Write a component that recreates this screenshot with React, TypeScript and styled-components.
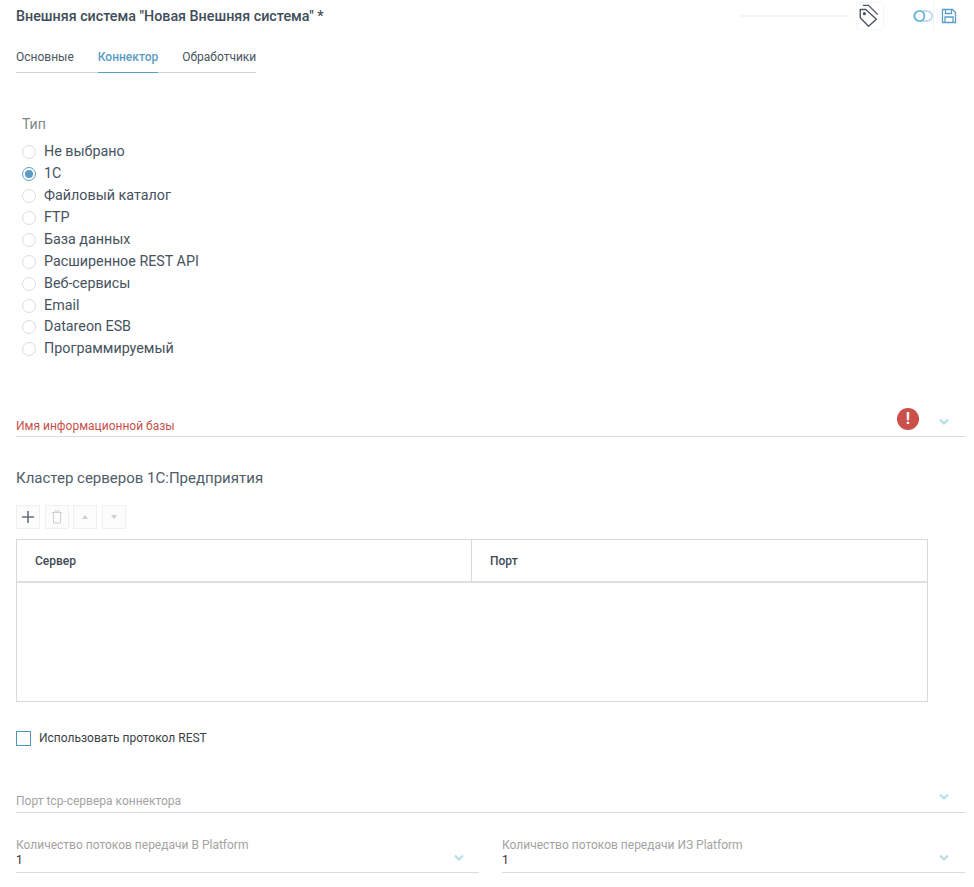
import React, { useState } from "react";
import styled, { createGlobalStyle } from "styled-components";

const GlobalStyle = createGlobalStyle`
  html, body {
    margin: 0;
    padding: 0;
    background: #fff;
    font-family: Roboto, "Liberation Sans", sans-serif;
  }
`;

const Page = styled.div`
  width: 974px;
  height: 887px;
  box-sizing: border-box;
  padding: 0 9px 0 16px;
  overflow: hidden;
`;

const Header = styled.header`
  display: flex;
  align-items: center;
  height: 30px;
  padding-top: 1px;
  box-sizing: border-box;
`;

const Title = styled.h1`
  flex: 1;
  margin: 0;
  font-size: 14.3px;
  font-weight: 500;
  color: #414d59;
`;

const HeaderLine = styled.div`
  width: 110px;
  height: 2px;
  margin-right: 7px;
  background: #f5f5f5;
`;

const TagButton = styled.button`
  display: flex;
  align-items: center;
  justify-content: center;
  width: 28px;
  height: 28px;
  padding: 0 2px 0 0;
  margin-right: 29px;
  background: #fff;
  border: 1px solid #f6f6f6;
  border-radius: 4px;
`;

const ToggleWrap = styled.div`
  display: flex;
  align-items: center;
  height: 28px;
  margin-right: -1px;
  border-right: 1px solid #f3f3f3;
`;

const SaveWrap = styled.div`
  display: flex;
  align-items: center;
  margin: 0 8px 0 8px;
`;

const Tabs = styled.nav`
  display: flex;
  gap: 24px;
  width: 240px;
  margin-top: 13px;
  border-bottom: 1px solid #d4d4d4;
`;

const Tab = styled.div<{ $active?: boolean }>`
  height: 30px;
  line-height: 28px;
  margin-bottom: -1px;
  box-sizing: border-box;
  font-size: 12px;
  font-weight: ${(p) => (p.$active ? 500 : 400)};
  color: ${(p) => (p.$active ? "#5b9cc4" : "#4a5560")};
  border-bottom: 1px solid ${(p) => (p.$active ? "#5b9cc4" : "transparent")};
`;

const RadioGroup = styled.section`
  margin-top: 42px;
  padding-left: 6px;
`;

const GroupLabel = styled.div`
  font-size: 14px;
  line-height: 18px;
  color: #7d8a86;
  margin-bottom: 7.4px;
`;

const RadioRow = styled.label`
  display: flex;
  align-items: center;
  height: 21.9px;
  font-size: 14.3px;
  color: #46525e;
`;

const RadioMark = styled.span<{ $checked?: boolean }>`
  position: relative;
  width: 14px;
  height: 14px;
  box-sizing: border-box;
  margin: 2px 8px 0 0;
  border-radius: 50%;
  border: 1px solid ${(p) => (p.$checked ? "#5b9cc4" : "#dcdcdc")};
  background: #fff;

  &::after {
    content: "";
    display: ${(p) => (p.$checked ? "block" : "none")};
    position: absolute;
    inset: 2px;
    border-radius: 50%;
    background: #5b9cc4;
  }
`;

const Field = styled.div<{ $height: number }>`
  position: relative;
  flex: 1;
  height: ${(p) => p.$height}px;
  box-sizing: border-box;
  border-bottom: 1px solid #dcdcdc;
`;

const FieldLabel = styled.div<{ $error?: boolean }>`
  font-size: 12px;
  line-height: 14px;
  color: ${(p) => (p.$error ? "#c9504a" : "#a3a3a3")};
`;

const FieldValue = styled.div`
  font-size: 12px;
  line-height: 14px;
  margin-top: 1px;
  color: #333;
`;

const BaseField = styled(Field)`
  margin-top: 48.6px;
  display: flex;
  align-items: flex-end;
  padding-bottom: 3px;
`;

const Chevron = styled.svg<{ $right: number; $top: number }>`
  position: absolute;
  right: ${(p) => p.$right}px;
  top: ${(p) => p.$top}px;
`;

const ErrorBadge = styled.div`
  position: absolute;
  right: 46px;
  top: 0;
  width: 22px;
  height: 22px;
  border-radius: 50%;
  background: #cb4f4a;
  display: flex;
  align-items: center;
  justify-content: center;
  color: #fff;
  font-size: 16px;
  font-weight: 700;
`;

const SectionTitle = styled.h2`
  margin: 32px 0 0;
  font-size: 15px;
  line-height: 18px;
  font-weight: 400;
  color: #4f5c68;
`;

const Toolbar = styled.div`
  display: flex;
  gap: 4.7px;
  margin-top: 18px;
`;

const ToolButton = styled.button`
  display: flex;
  align-items: center;
  justify-content: center;
  width: 24px;
  height: 24px;
  padding: 0;
  background: #fcfcfc;
  border: 1px solid #f0f0f0;
`;

const Table = styled.div`
  width: 912px;
  height: 163px;
  margin-top: 10px;
  box-sizing: border-box;
  border: 1px solid #d9d9d9;
`;

const TableHead = styled.div`
  display: grid;
  grid-template-columns: 454px 1fr;
  height: 43px;
  box-sizing: border-box;
  border-bottom: 2px solid #e0e0e0;
`;

const HeadCell = styled.div`
  display: flex;
  align-items: center;
  padding: 2px 0 0 18px;
  font-size: 12px;
  font-weight: 500;
  color: #3f4a55;

  & + & {
    border-left: 1px solid #d9d9d9;
  }
`;

const CheckRow = styled.label`
  display: flex;
  align-items: center;
  gap: 8px;
  margin-top: 29px;
  font-size: 12px;
  color: #3a3f45;
`;

const CheckBox = styled.span`
  width: 15px;
  height: 15px;
  box-sizing: border-box;
  border: 1px solid #4f94ba;
`;

const PortField = styled(Field)`
  margin-top: 37px;
  display: flex;
  align-items: flex-end;
  padding-bottom: 4px;
`;

const FieldRow = styled.div`
  display: flex;
  gap: 23px;
  margin-top: 25px;
`;

const ChevronIcon = ({ right, top }: { right: number; top: number }) => (
  <Chevron $right={right} $top={top} width="12" height="8" viewBox="0 0 12 8" fill="none">
    <path d="M2 1.5 L6 5.5 L10 1.5" stroke="#b5dcec" strokeWidth="2" />
  </Chevron>
);

const TYPES = [
  "Не выбрано",
  "1С",
  "Файловый каталог",
  "FTP",
  "База данных",
  "Расширенное REST API",
  "Веб-сервисы",
  "Email",
  "Datareon ESB",
  "Программируемый",
];

export default function App(): React.ReactElement {
  const [type, setType] = useState("1С");

  return (
    <Page>
      <GlobalStyle />
      <Header>
        <Title>Внешняя система "Новая Внешняя система" *</Title>
        <HeaderLine />
        <TagButton>
          <svg width="26" height="26" viewBox="0 0 26 26" fill="none" stroke="#4a5560" strokeWidth="1.5" strokeLinejoin="round">
            <path d="M3.5 7 H9.5 L21 17.5 L12.5 25 L3.5 16 Z" transform="translate(0 -1)" />
            <path d="M6.5 1.5 H12.5 L22.5 11.5" />
            <circle cx="8" cy="10.5" r="1" fill="#4a5560" />
          </svg>
        </TagButton>
        <ToggleWrap>
          <svg width="20" height="12" viewBox="0 0 20 12" fill="none">
            <rect x="1" y="1" width="18" height="10" rx="5" stroke="#a9d6ea" strokeWidth="1.5" />
            <circle cx="6.5" cy="6" r="5" fill="#fff" stroke="#66b3d8" strokeWidth="1.7" />
          </svg>
        </ToggleWrap>
        <SaveWrap>
          <svg width="16" height="16" viewBox="0 0 16 16" fill="none" stroke="#5b9fc6" strokeWidth="1.3">
            <path d="M1.5 1.5 H11.5 L14.5 4.5 V14.5 H1.5 Z" />
            <path d="M4.5 1.5 V5.5 H10.5 V1.5" />
            <path d="M4 14.5 V9 H12 V14.5" />
          </svg>
        </SaveWrap>
      </Header>

      <Tabs>
        <Tab>Основные</Tab>
        <Tab $active>Коннектор</Tab>
        <Tab>Обработчики</Tab>
      </Tabs>

      <RadioGroup>
        <GroupLabel>Тип</GroupLabel>
        {TYPES.map((t) => (
          <RadioRow key={t} onClick={() => setType(t)}>
            <RadioMark $checked={type === t} />
            {t}
          </RadioRow>
        ))}
      </RadioGroup>

      <BaseField $height={29}>
        <FieldLabel $error>Имя информационной базы</FieldLabel>
        <ErrorBadge>!</ErrorBadge>
        <ChevronIcon right={15} top={10} />
      </BaseField>

      <SectionTitle>Кластер серверов 1С:Предприятия</SectionTitle>

      <Toolbar>
        <ToolButton>
          <svg width="14" height="14" viewBox="0 0 14 14" stroke="#66707a" strokeWidth="1.6">
            <path d="M7 1 V13 M1 7 H13" />
          </svg>
        </ToolButton>
        <ToolButton>
          <svg width="12" height="14" viewBox="0 0 12 14" fill="none" stroke="#cfcfcf" strokeWidth="1">
            <path d="M1 2.5 H11 M4 2.5 V1 H8 V2.5 M2.5 2.5 V13 H9.5 V2.5" />
          </svg>
        </ToolButton>
        <ToolButton>
          <svg width="6" height="4" viewBox="0 0 6 4" fill="#cfcfcf">
            <path d="M0 4 L3 0 L6 4 Z" />
          </svg>
        </ToolButton>
        <ToolButton>
          <svg width="6" height="4" viewBox="0 0 6 4" fill="#cfcfcf">
            <path d="M0 0 L3 4 L6 0 Z" />
          </svg>
        </ToolButton>
      </Toolbar>

      <Table>
        <TableHead>
          <HeadCell>Сервер</HeadCell>
          <HeadCell>Порт</HeadCell>
        </TableHead>
      </Table>

      <CheckRow>
        <CheckBox />
        Использовать протокол REST
      </CheckRow>

      <PortField $height={30}>
        <FieldLabel>Порт tcp-сервера коннектора</FieldLabel>
        <ChevronIcon right={15} top={10} />
      </PortField>

      <FieldRow>
        <Field $height={35}>
          <FieldLabel>Количество потоков передачи В Platform</FieldLabel>
          <FieldValue>1</FieldValue>
          <ChevronIcon right={14} top={16} />
        </Field>
        <Field $height={35}>
          <FieldLabel>Количество потоков передачи ИЗ Platform</FieldLabel>
          <FieldValue>1</FieldValue>
          <ChevronIcon right={15} top={16} />
        </Field>
      </FieldRow>
    </Page>
  );
}
